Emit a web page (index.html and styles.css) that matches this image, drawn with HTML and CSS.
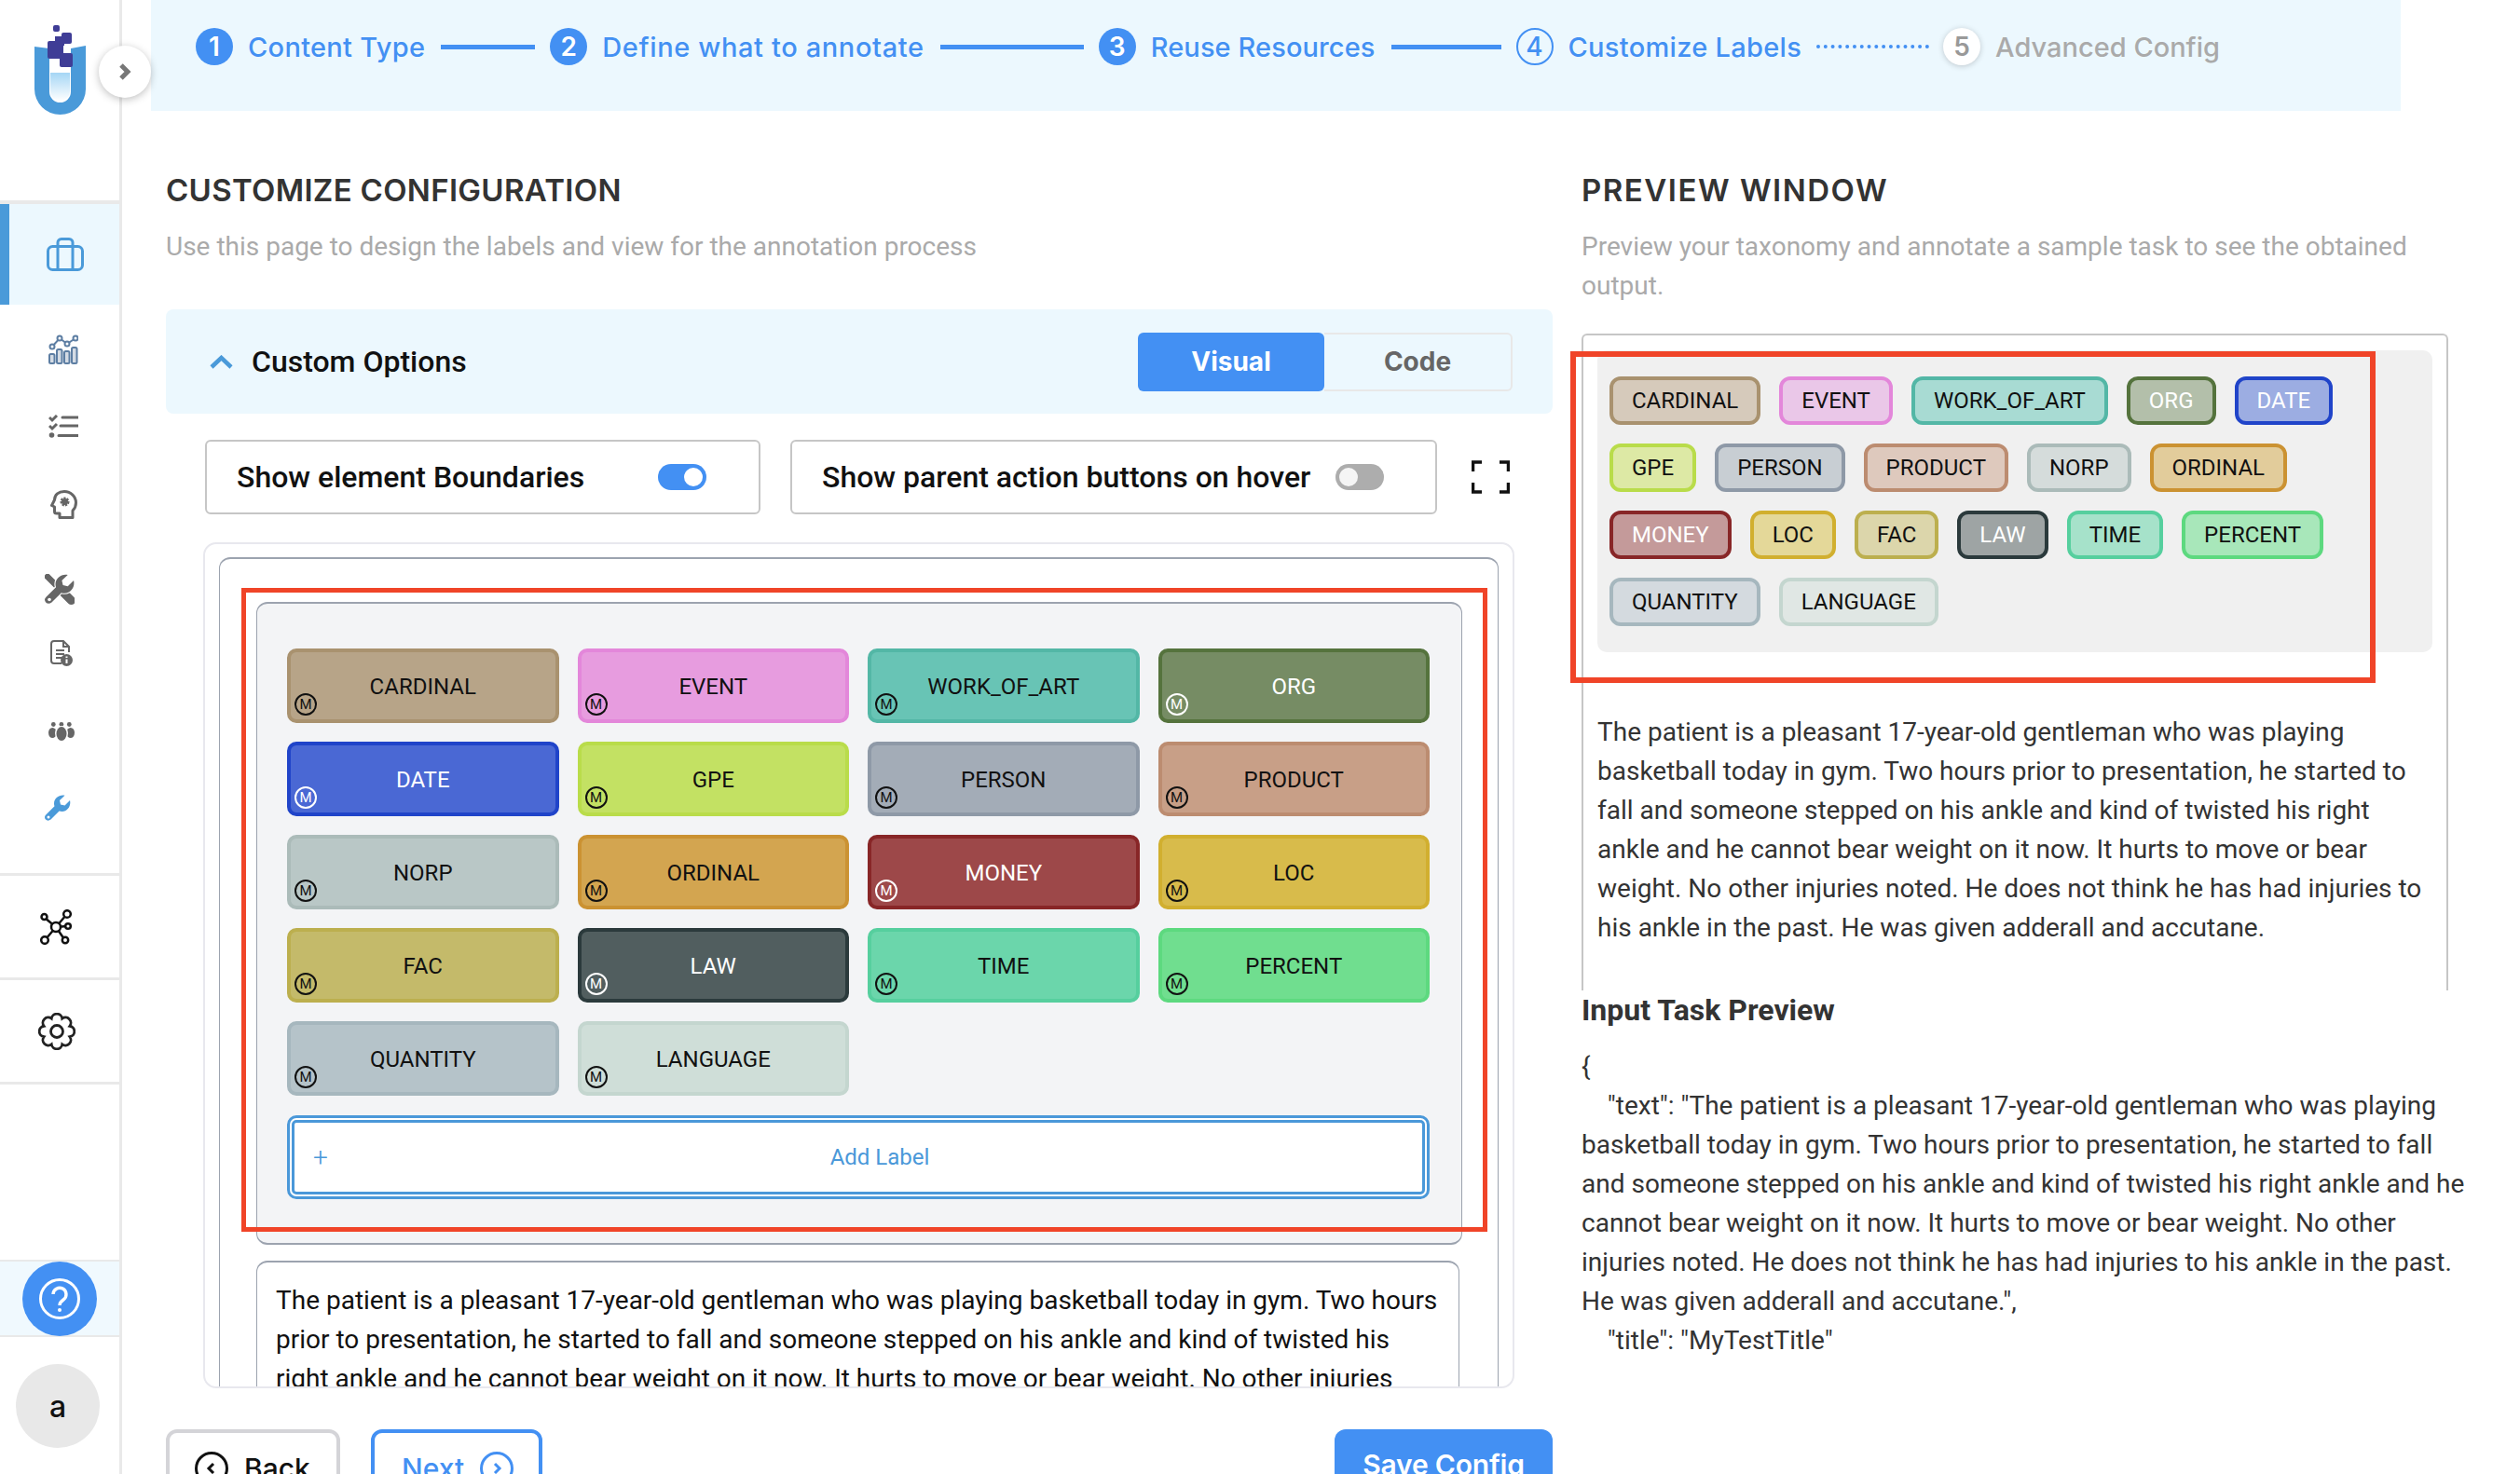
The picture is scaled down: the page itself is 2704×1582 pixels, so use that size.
FILE: index.html
```
<!DOCTYPE html>
<html lang="en">
<head>
<meta charset="utf-8">
<title>Customize Labels</title>
<link rel="stylesheet" href="styles.css">
</head>
<body>
<aside class="sidebar">
  <div class="brand">
    <svg class="logo" width="55" height="96" viewBox="0 0 55 96">
      <defs><linearGradient id="liq" x1="0" y1="0" x2="0" y2="1"><stop offset="0" stop-color="#a5d6f5"/><stop offset="1" stop-color="#ffffff"/></linearGradient></defs>
      <path d="M17 51H38V71A10.500 10.500 0 0 1 17 71Z" fill="url(#liq)"/>
      <path d="M0 23L16 25V71.500A11.500 11.500 0 0 0 39 71.500V25L55 22V68.500A27.500 27.500 0 0 1 0 68.500Z" fill="#4a9ad9"/>
      <g fill="#3f3d96"><rect x="20" y="0" width="7" height="7" rx="2"/><rect x="29" y="8" width="11" height="12" rx="2"/><rect x="14" y="17" width="17" height="19" rx="2"/><rect x="27" y="30" width="14" height="15" rx="2"/><rect x="22" y="12" width="10" height="10"/></g>
    </svg>
    <button class="expand" type="button" aria-label="Expand">
      <svg width="14" height="20" viewBox="0 0 14 20"><path d="M3 3l7 7-7 7" fill="none" stroke="#777" stroke-width="5"/></svg>
    </button>
  </div>
  <nav class="nav">
    <a class="nav-item is-active">
      <svg class="ic ic-case" width="40" height="36" viewBox="0 0 40 36" fill="none" stroke="#4a9ad9" stroke-width="3"><rect x="1.500" y="9.500" width="37" height="25" rx="5"/><path d="M12 34V6a4 4 0 0 1 4-4.500h8a4 4 0 0 1 4 4.500V34"/></svg>
    </a>
    <a class="nav-item nav-chart">
      <svg class="ic" width="32" height="32" viewBox="0 0 32 32" fill="#d4dbe4" stroke="#5d7ea3" stroke-width="2"><rect x="1" y="21" width="5.500" height="10" rx="1.500"/><rect x="9" y="16" width="5.500" height="15" rx="1.500"/><rect x="17" y="18" width="5.500" height="13" rx="1.500"/><rect x="25" y="14" width="5.500" height="17" rx="1.500"/><path d="M4 13L12 4l8 6 9-6" fill="none"/><g fill="#fff"><circle cx="4" cy="13" r="2.500"/><circle cx="12" cy="4" r="2.500"/><circle cx="20" cy="10" r="2.500"/><circle cx="29" cy="4" r="2.500"/></g></svg>
    </a>
    <a class="nav-item nav-list">
      <svg class="ic" width="32" height="25" viewBox="0 0 32 25" fill="none" stroke="#666" stroke-width="3"><path d="M1 3l3 3 5-5M1 12l3 3 5-5"/><path d="M15 3H32M13 12H32M11 22.500H32" stroke-linecap="round"/><circle cx="3.500" cy="22" r="2.800" fill="#666" stroke="none"/></svg>
    </a>
    <a class="nav-item nav-head">
      <svg class="ic" width="29" height="31" viewBox="0 0 29 31" fill="none" stroke="#666" stroke-width="3"><path d="M10 29.500V25H6.500a2 2 0 0 1-2-2V18L1.500 16.500 4.500 10.500C4.500 5 9 1.500 15 1.500 22 1.500 27.500 7 27.500 13.500 27.500 17 26 20 24 22V29.500Z" stroke-linejoin="round"/><circle cx="15.500" cy="12.500" r="3.500" fill="#666" stroke-dasharray="2 1"/></svg>
    </a>
    <a class="nav-item nav-tools">
      <svg class="ic ic-left" width="32" height="33" viewBox="0 0 32 33"><path d="M3 3L15 15" stroke="#666" stroke-width="6.500" stroke-linecap="round"/><path d="M15 15L28.500 28.500" stroke="#666" stroke-width="9" stroke-linecap="round"/><path transform="scale(1.150)" d="M27 6L21.500 11.500 17 10.500 16 6 21.500 .8C16-.5 10 3.500 10 9.500 10 10.500 10.200 11.500 10.500 12.300L1.500 21.300C-.5 23.300-.3 25 1 26.500 2.500 28 4.500 28 6.500 26.500L15.500 17.500C16.500 17.800 17.500 18 18.500 18 24.500 18 28.500 12 27 6Z" fill="#666" stroke="#fff" stroke-width="2" paint-order="stroke"/><circle cx="5" cy="27.500" r="1.800" fill="#fff"/></svg>
    </a>
    <a class="nav-item nav-doc">
      <svg class="ic ic-left" width="24" height="28" viewBox="0 0 24 28" fill="none" stroke="#666" stroke-width="2"><path d="M12 25H4a3 3 0 0 1-3-3V4a3 3 0 0 1 3-3h10l6 6v6M14 1v6h6"/><path d="M6 11h9M6 15h9M6 19h6"/><circle cx="17.500" cy="21.500" r="6.500" fill="#666" stroke="none"/><path d="M17.500 20.500v4.500M17.500 17.500v1.500" stroke="#fff"/></svg>
    </a>
    <a class="nav-item nav-people">
      <svg class="ic ic-left" width="28" height="20" viewBox="0 0 28 20" fill="#666"><circle cx="5.300" cy="2.500" r="2.400"/><circle cx="13.900" cy="2.500" r="2.400"/><circle cx="22.300" cy="2.500" r="2.400"/><ellipse cx="4.300" cy="11.500" rx="4.300" ry="5.500"/><ellipse cx="23.700" cy="11.500" rx="4.300" ry="5.500"/><ellipse cx="14" cy="12" rx="7" ry="8" fill="#fff"/><ellipse cx="14" cy="12.500" rx="5.500" ry="7.500"/></svg>
    </a>
    <a class="nav-item nav-wrench">
      <svg class="ic ic-left2" width="28" height="28" viewBox="0 0 28 28"><path d="M27 6L21.500 11.500 17 10.500 16 6 21.500 .8C16-.5 10 3.500 10 9.500 10 10.500 10.200 11.500 10.500 12.300L1.500 21.300C-.5 23.300-.3 25 1 26.500 2.500 28 4.500 28 6.500 26.500L15.500 17.500C16.500 17.800 17.500 18 18.500 18 24.500 18 28.500 12 27 6Z" fill="#4a9ad9"/><circle cx="4" cy="24" r="1.500" fill="#fff"/></svg>
    </a>
  </nav>
  <div class="side-block side-network">
    <svg width="34" height="38" viewBox="0 0 34 38" fill="none" stroke="#111" stroke-width="2.500"><path d="M17 19L5 9M17 19L28 6M17 19L29 18M17 19L6 32M17 19L26 32"/><circle cx="17" cy="19" r="5" fill="#fff"/><circle cx="4.500" cy="8" r="3" fill="#fff"/><circle cx="29" cy="5" r="3.800" fill="#fff"/><circle cx="30" cy="18" r="2.800" fill="#fff"/><circle cx="5" cy="33" r="3.800" fill="#fff"/><circle cx="27" cy="33" r="3.200" fill="#fff"/></svg>
  </div>
  <div class="side-block side-gear">
    <svg width="40" height="40" viewBox="0 0 40 40" fill="none" stroke="#222" stroke-width="2.800"><path d="M25.740 6.140A5.800 5.800 0 0 1 33.860 14.260A5.800 5.800 0 0 1 33.860 25.740A5.800 5.800 0 0 1 25.740 33.860A5.800 5.800 0 0 1 14.260 33.860A5.800 5.800 0 0 1 6.140 25.740A5.800 5.800 0 0 1 6.140 14.260A5.800 5.800 0 0 1 14.260 6.140A5.800 5.800 0 0 1 25.740 6.140Z"/><circle cx="20" cy="20" r="6.500"/></svg>
  </div>
  <div class="side-help">
    <span class="help-circle">
      <svg width="46" height="46" viewBox="0 0 46 46" fill="none" stroke="#fff" stroke-width="3"><circle cx="23" cy="23" r="20.500"/><path d="M16 18a7 7 0 1 1 11 6c-3 2-4 3-4 6" stroke-width="3.400"/><circle cx="23" cy="35" r="2" fill="#fff" stroke="none"/></svg>
    </span>
  </div>
  <div class="side-user"><span class="avatar">a</span></div>
</aside>

<main class="main">
  <header class="stepper">
    <span class="num">1</span><span class="step-text t1">Content Type</span><span class="line l1"></span>
    <span class="num">2</span><span class="step-text t2">Define what to annotate</span><span class="line l2"></span>
    <span class="num">3</span><span class="step-text t3">Reuse Resources</span><span class="line l3"></span>
    <span class="num num-current">4</span><span class="step-text t4">Customize Labels</span><span class="dots"></span>
    <span class="num num-todo">5</span><span class="step-text step-muted t5">Advanced Config</span>
  </header>

  <div class="content">
    <section class="col-left">
      <h2 class="title">CUSTOMIZE CONFIGURATION</h2>
      <p class="sub">Use this page to design the labels and view for the annotation process</p>

      <div class="options-bar">
        <svg class="chev" width="25" height="15" viewBox="0 0 25 15"><path d="M2 13L12.500 3 23 13" fill="none" stroke="#4a9ad9" stroke-width="4.500"/></svg>
        <span class="options-title">Custom Options</span>
        <div class="tabs"><span class="tab tab-on">Visual</span><span class="tab">Code</span></div>
      </div>

      <div class="switches">
        <div class="switch-box box-a"><span class="switch-text">Show element Boundaries</span><span class="toggle toggle-on"></span></div>
        <div class="switch-box box-b"><span class="switch-text">Show parent action buttons on hover</span><span class="toggle"></span></div>
        <svg class="fs" width="41" height="36" viewBox="0 0 41 36" fill="none" stroke="#111" stroke-width="3.500"><path d="M1.500 12V2H11M30 2h9.500V12M1.500 24V34H11M30 34h9.500V24"/></svg>
      </div>

      <div class="editor">
        <div class="editor-inner">
          <div class="labels">
            <div class="label-grid">
              <div class="label c-cardinal"><span class="badge">M</span>CARDINAL</div>
              <div class="label c-event"><span class="badge">M</span>EVENT</div>
              <div class="label c-work"><span class="badge">M</span>WORK_OF_ART</div>
              <div class="label c-org light"><span class="badge">M</span>ORG</div>
              <div class="label c-date light"><span class="badge">M</span>DATE</div>
              <div class="label c-gpe"><span class="badge">M</span>GPE</div>
              <div class="label c-person"><span class="badge">M</span>PERSON</div>
              <div class="label c-product"><span class="badge">M</span>PRODUCT</div>
              <div class="label c-norp"><span class="badge">M</span>NORP</div>
              <div class="label c-ordinal"><span class="badge">M</span>ORDINAL</div>
              <div class="label c-money light"><span class="badge">M</span>MONEY</div>
              <div class="label c-loc"><span class="badge">M</span>LOC</div>
              <div class="label c-fac"><span class="badge">M</span>FAC</div>
              <div class="label c-law light"><span class="badge">M</span>LAW</div>
              <div class="label c-time"><span class="badge">M</span>TIME</div>
              <div class="label c-percent"><span class="badge">M</span>PERCENT</div>
              <div class="label c-quantity"><span class="badge">M</span>QUANTITY</div>
              <div class="label c-language"><span class="badge">M</span>LANGUAGE</div>
            </div>
            <button class="add-label" type="button"><span class="plus">+</span><span class="add-text">Add Label</span></button>
            <span class="red red-left"></span>
          </div>
          <div class="sample">The patient is a pleasant 17-year-old gentleman who was playing basketball today in gym. Two hours prior to presentation, he started to fall and someone stepped on his ankle and kind of twisted his right ankle and he cannot bear weight on it now. It hurts to move or bear weight. No other injuries noted. He does not think he has had injuries to his ankle in the past. He was given adderall and accutane.</div>
        </div>
      </div>

      <div class="actions">
        <button class="btn btn-back" type="button"><svg width="36" height="36" viewBox="0 0 36 36" fill="none" stroke="#111" stroke-width="3"><circle cx="18" cy="18" r="16.500"/><path d="M20 13l-5 5 5 5"/></svg>Back</button>
        <button class="btn btn-next" type="button">Next<svg width="36" height="36" viewBox="0 0 36 36" fill="none" stroke="#4390f3" stroke-width="3"><circle cx="18" cy="18" r="16.500"/><path d="M16 13l5 5-5 5"/></svg></button>
        <button class="btn btn-save" type="button">Save Config</button>
      </div>
    </section>

    <section class="col-right">
      <h2 class="title title-wide">PREVIEW WINDOW</h2>
      <p class="sub">Preview your taxonomy and annotate a sample task to see the obtained output.</p>
      <div class="preview">
        <div class="chips">
          <span class="chip c-cardinal">CARDINAL</span>
          <span class="chip c-event">EVENT</span>
          <span class="chip c-work">WORK_OF_ART</span>
          <span class="chip c-org light">ORG</span>
          <span class="chip c-date light">DATE</span>
          <span class="chip c-gpe">GPE</span>
          <span class="chip c-person">PERSON</span>
          <span class="chip c-product">PRODUCT</span>
          <span class="chip c-norp">NORP</span>
          <span class="chip c-ordinal">ORDINAL</span>
          <span class="chip c-money light">MONEY</span>
          <span class="chip c-loc">LOC</span>
          <span class="chip c-fac">FAC</span>
          <span class="chip c-law light">LAW</span>
          <span class="chip c-time">TIME</span>
          <span class="chip c-percent">PERCENT</span>
          <span class="chip c-quantity">QUANTITY</span>
          <span class="chip c-language">LANGUAGE</span>
          <span class="red red-right"></span>
        </div>
        <p class="preview-text">The patient is a pleasant 17-year-old gentleman who was playing basketball today in gym. Two hours prior to presentation, he started to fall and someone stepped on his ankle and kind of twisted his right ankle and he cannot bear weight on it now. It hurts to move or bear weight. No other injuries noted. He does not think he has had injuries to his ankle in the past. He was given adderall and accutane.</p>
      </div>
      <h3 class="task-title">Input Task Preview</h3>
      <div class="json">{
    "text": "The patient is a pleasant 17-year-old gentleman who was playing basketball today in gym. Two hours prior to presentation, he started to fall and someone stepped on his ankle and kind of twisted his right ankle and he cannot bear weight on it now. It hurts to move or bear weight. No other injuries noted. He does not think he has had injuries to his ankle in the past. He was given adderall and accutane.",
    "title": "MyTestTitle"</div>
    </section>
  </div>
</main>
</body>
</html>
```
FILE: styles.css
```
* { box-sizing: border-box; }
html, body { height: 100%; margin: 0; overflow: hidden; background: #fff; }
body { display: flex; font-family: Roboto, "Liberation Sans", sans-serif; color: #111; }
button { font: inherit; cursor: pointer; }

/* Sidebar */
.sidebar { position: relative; flex: 0 0 131px; height: 1582px; display: flex; flex-direction: column; border-right: 3px solid #e9e9e9; background: #fff; }
.brand { position: relative; height: 219px; padding: 27px 0 0 37px; border-bottom: 4px solid #e9e9e9; }
.logo { display: block; }
.expand { position: absolute; left: 106px; top: 49px; width: 56px; height: 56px; padding: 0; border: 0; border-radius: 50%; background: #fff; box-shadow: 0 2px 8px rgba(0,0,0,.25); display: flex; align-items: center; justify-content: center; z-index: 3; }
.nav { height: 721px; border-bottom: 3px solid #e9e9e9; }
.nav-item { display: flex; align-items: center; padding-left: 52px; height: 56px; }
.ic-case { margin-left: -2px; }
.ic-left { margin-left: -2px; }
.ic-left2 { margin-left: -4px; }
.is-active { height: 108px; padding-left: 50px; background: #ecf8fe; border-left: 10px solid #4a9ad9; }
.is-active .ic-case { margin-left: -10px; }
.nav-chart { height: 96px; }
.nav-list { height: 68px; }
.nav-head { height: 100px; padding-left: 54px; }
.nav-tools { height: 82px; padding-left: 50px; }
.nav-doc { height: 56px; padding-left: 56px; }
.nav-people { height: 112px; padding-left: 54px; }
.nav-wrench { height: 52px; padding-left: 52px; }
.side-block { display: flex; align-items: center; padding-left: 43px; }
.side-network { height: 112px; border-bottom: 3px solid #e9e9e9; }
.side-gear { height: 112px; padding-left: 41px; border-bottom: 3px solid #e9e9e9; }
.side-help { margin-top: 188px; height: 83px; display: flex; align-items: center; padding-left: 24px; background: #f0f9fe; border-top: 2px solid #e9e9e9; border-bottom: 2px solid #e9e9e9; }
.help-circle { width: 80px; height: 80px; border-radius: 50%; background: #4390f3; display: flex; align-items: center; justify-content: center; }
.side-user { padding: 29px 0 0 17px; }
.avatar { display: flex; width: 90px; height: 90px; border-radius: 50%; background: #e8e8e8; align-items: center; justify-content: center; font: 500 32px Inter, sans-serif; color: #111; }

/* Main */
.main { flex: 1; min-width: 0; }
.stepper { margin-left: 31px; width: 2414px; height: 119px; padding: 0 0 19px 48px; background: #ecf8fe; display: flex; align-items: center; font: 500 29px Inter, sans-serif; color: #4390f3; }
.num { flex: none; width: 40px; height: 40px; border-radius: 50%; background: #4390f3; color: #fff; display: flex; align-items: center; justify-content: center; font-size: 28px; font-weight: 600; }
.num-current { background: transparent; color: #4390f3; border: 2px solid #4390f3; font-weight: 500; }
.num-todo { background: #fff; color: #999; box-shadow: 0 1px 6px rgba(0,0,0,.2); margin-left: 15px; }
.step-text { margin-left: 16px; white-space: nowrap; }
.t1 { letter-spacing: .3px; }
.t2 { letter-spacing: .63px; }
.t3 { letter-spacing: .1px; }
.t4 { letter-spacing: .3px; }
.step-muted { color: #aaa; }
.line { flex: none; height: 5px; background: #4390f3; margin: 0 16px 0 17px; }
.l1 { width: 101px; }
.l2 { width: 154px; }
.l3 { width: 118px; }
.dots { flex: none; width: 121px; margin-left: 16px; border-top: 4px dotted #4390f3; }

.content { display: grid; grid-template-columns: 1488px 955px; column-gap: 31px; padding: 65px 0 0 47px; }
.title { margin: 0; font: 600 33px/40px Inter, sans-serif; letter-spacing: .3px; color: #333; }
.title-wide { letter-spacing: 1.5px; }
.sub { margin: 20px 0 0; font-size: 28px; line-height: 42px; color: #aaa; }

.options-bar { margin-top: 46px; height: 112px; padding: 0 43px 0 47px; display: flex; align-items: center; background: #ecf8fe; border-radius: 8px; }
.chev { flex: none; }
.options-title { margin-left: 20px; font-size: 32px; font-weight: 500; color: #111; }
.tabs { margin-left: auto; display: flex; width: 402px; height: 63px; }
.tab { flex: 1; display: flex; align-items: center; justify-content: center; font: 700 28px Inter, sans-serif; color: #666; border: 2px solid #e8e8e8; border-left: 0; border-radius: 0 6px 6px 0; }
.tab-on { flex: 0 0 200px; background: #4390f3; color: #fff; border: 0; border-radius: 6px; }

.switches { margin: 28px 0 0 42px; display: flex; align-items: center; }
.switch-box { height: 80px; display: flex; align-items: center; justify-content: space-between; border: 2px solid #c6c6c6; border-radius: 6px; padding-left: 32px; }
.box-a { width: 596px; padding-right: 56px; }
.box-b { width: 694px; margin-left: 32px; padding-right: 55px; }
.switch-text { font-size: 32px; font-weight: 500; color: #111; white-space: nowrap; }
.toggle { position: relative; flex: none; width: 52px; height: 28px; border-radius: 14px; background: #adadad; }
.toggle::after { content: ""; position: absolute; left: 4px; top: 4px; width: 20px; height: 20px; border-radius: 50%; background: #f5f5f5; }
.toggle-on { background: #4390f3; }
.toggle-on::after { left: 28px; background: #fff; }
.fs { flex: none; margin-left: 37px; }

.editor { margin: 30px 0 0 40px; width: 1407px; height: 908px; padding: 14px 15px 0; overflow: hidden; border: 2px solid #e8e8ee; border-radius: 14px; }
.editor-inner { height: 1000px; padding: 46px 38px 0 39px; border: 2px solid #9ca3af; border-width: 2px 1.500px 0; border-radius: 12px 12px 0 0; }
.labels { position: relative; height: 690px; padding: 48px 31px 0 32px; background: #f3f4f6; border: 2px solid #9ca3af; border-width: 2px 1.500px; border-radius: 12px; }
.label-grid { display: grid; grid-template-columns: repeat(4, 291.500px); gap: 20px; }
.label { position: relative; height: 80px; padding-top: 2px; display: flex; align-items: center; justify-content: center; border: 4px solid var(--line); border-radius: 10px; background: var(--fill); font-size: 24px; color: #111; }
.light { color: #fff; }
.badge { position: absolute; left: 4px; bottom: 4px; width: 24px; height: 24px; display: flex; align-items: center; justify-content: center; border: 2px solid currentColor; border-radius: 50%; font-size: 15px; font-weight: 400; }
.add-label { margin-top: 21px; width: 1226px; height: 90px; padding: 0 14px 0 20px; display: flex; align-items: center; background: #fff; border: 8px double #4a98d9; border-radius: 10px; color: #4a98d9; font-size: 24px; }
.plus { font-size: 28px; font-weight: 300; width: 40px; text-align: left; }
.add-text { flex: 1; text-align: center; }
.red { position: absolute; border: 5px solid #f04428; pointer-events: none; z-index: 2; }
.red-left { left: -17px; right: -28px; top: -17px; bottom: 12px; }
.red-right { left: -29px; right: 61px; top: 1px; bottom: -33px; border-width: 6px; }
.sample { margin-top: 17px; width: 1291px; height: 300px; padding: 20px 20px 0; border: 2px solid #9ca3af; border-width: 2px 1.500px 0; border-radius: 12px 12px 0 0; font-size: 28px; line-height: 42px; color: #111; }

.actions { margin-top: 44px; display: flex; }
.btn { height: 90px; display: flex; align-items: flex-start; padding: 20px 0 0; border-radius: 12px; background: #fff; font: 500 30px/36px Inter, sans-serif; }
.btn-back { width: 187px; padding-left: 27px; border: 4px solid #d4d4d8; color: #111; }
.btn-back svg { margin-right: 17px; }
.btn-next { width: 184px; margin-left: 33px; padding-left: 29px; border: 4px solid #4390f3; color: #4390f3; }
.btn-next svg { margin-left: 17px; }
.btn-save { width: 234px; margin-left: auto; justify-content: center; border: 0; background: #4390f3; color: #fff; font-weight: 600; letter-spacing: -.2px; }

/* Preview */
.preview { margin-top: 30px; height: 705px; padding: 16px 15px 0; border: 2px solid #c6c6c6; border-bottom: 0; border-radius: 6px 6px 0 0; width: 930px; }
.chips { position: relative; height: 324px; padding: 28px 13px 0; background: #f0f0f0; border-radius: 10px; display: flex; flex-wrap: wrap; align-content: flex-start; gap: 20px 20px; width: 896px; }
.chip { height: 52px; display: flex; align-items: center; padding: 0 20px; border: 4px solid var(--line); border-radius: 12px; background: var(--soft); font-size: 24px; color: #111; }
.chips .light { color: #fff; }
.preview-text { margin: 65px 0 0; font-size: 28px; line-height: 42px; color: #333; }
.task-title { margin: 1px 0 0; font-size: 32px; line-height: 40px; font-weight: 700; color: #333; }
.json { margin-top: 20px; font-size: 28px; line-height: 42px; color: #333; white-space: pre-wrap; }

/* Label palette */
.c-cardinal { --line: #a9926f; --fill: #b7a488; --soft: #d6cabb; }
.c-event { --line: #e387da; --fill: #e79cdf; --soft: #eac7e8; }
.c-work { --line: #53b7a6; --fill: #68c4b5; --soft: #a8dbd3; }
.c-org { --line: #55733d; --fill: #768c64; --soft: #b3bfaa; }
.c-date { --line: #2044c9; --fill: #4a68d4; --soft: #9cade2; }
.c-gpe { --line: #b9dc4a; --fill: #c3e163; --soft: #dde9a5; }
.c-person { --line: #8e99a7; --fill: #a3acb7; --soft: #c8ced3; }
.c-product { --line: #bc8c70; --fill: #c89f87; --soft: #dec9bd; }
.c-norp { --line: #abbbb9; --fill: #b9c7c6; --soft: #d5dcdb; }
.c-ordinal { --line: #cb9232; --fill: #d3a550; --soft: #e2cc9b; }
.c-money { --line: #882627; --fill: #9d4849; --soft: #c49a9a; }
.c-loc { --line: #d1af2f; --fill: #d8bb4b; --soft: #e4d899; }
.c-fac { --line: #bcaf4e; --fill: #c4ba6a; --soft: #dcd6ab; }
.c-law { --line: #2b3a3c; --fill: #515e5f; --soft: #9ea4a4; }
.c-time { --line: #56cf9e; --fill: #6bd6ab; --soft: #a6e2ca; }
.c-percent { --line: #5dd97f; --fill: #70de8f; --soft: #a8e7ba; }
.c-quantity { --line: #a6b7be; --fill: #b5c3c9; --soft: #d4dadf; }
.c-language { --line: #c4d6cf; --fill: #cfded8; --soft: #e0e7e4; }
```
